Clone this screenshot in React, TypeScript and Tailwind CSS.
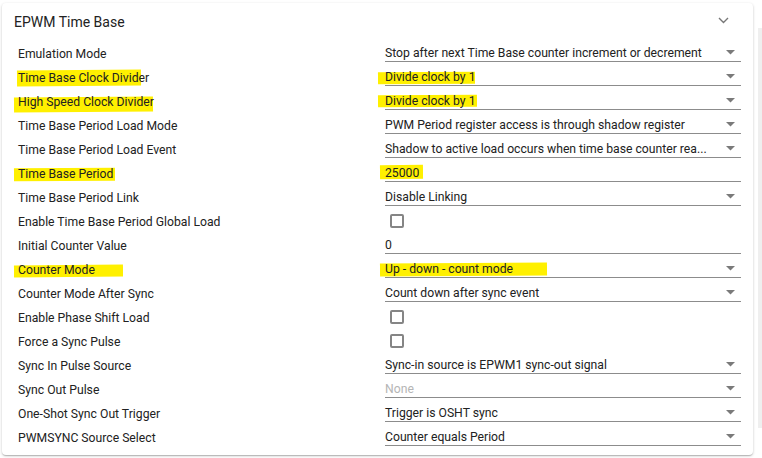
import React from 'react';

type Hl = { left: number; width: number; top: number; height: number };
type Row = {
  label: string;
  kind: 'select' | 'input' | 'check';
  value?: string;
  muted?: boolean;
  labelHl?: Hl;
  valueHl?: Hl;
};

const rows: Row[] = [
  { label: 'Emulation Mode', kind: 'select', value: 'Stop after next Time Base counter increment or decrement' },
  {
    label: 'Time Base Clock Divider', kind: 'select', value: 'Divide clock by 1',
    labelHl: { left: -1, width: 124, top: 5, height: 16 },
    valueHl: { left: -7, width: 97, top: 7, height: 12 },
  },
  {
    label: 'High Speed Clock Divider', kind: 'select', value: 'Divide clock by 1',
    labelHl: { left: -4, width: 139, top: 8, height: 15 },
    valueHl: { left: -7, width: 99, top: 6, height: 12 },
  },
  { label: 'Time Base Period Load Mode', kind: 'select', value: 'PWM Period register access is through shadow register' },
  { label: 'Time Base Period Load Event', kind: 'select', value: 'Shadow to active load occurs when time base counter rea...' },
  {
    label: 'Time Base Period', kind: 'input', value: '25000',
    labelHl: { left: -4, width: 101, top: 7, height: 13 },
    valueHl: { left: -5, width: 43, top: 4, height: 14 },
  },
  { label: 'Time Base Period Link', kind: 'select', value: 'Disable Linking' },
  { label: 'Enable Time Base Period Global Load', kind: 'check' },
  { label: 'Initial Counter Value', kind: 'input', value: '0' },
  {
    label: 'Counter Mode', kind: 'select', value: 'Up - down - count mode',
    labelHl: { left: -4, width: 109, top: 8, height: 12 },
    valueHl: { left: -5, width: 167, top: 6, height: 13 },
  },
  { label: 'Counter Mode After Sync', kind: 'select', value: 'Count down after sync event' },
  { label: 'Enable Phase Shift Load', kind: 'check' },
  { label: 'Force a Sync Pulse', kind: 'check' },
  { label: 'Sync In Pulse Source', kind: 'select', value: 'Sync-in source is EPWM1 sync-out signal' },
  { label: 'Sync Out Pulse', kind: 'select', value: 'None', muted: true },
  { label: 'One-Shot Sync Out Trigger', kind: 'select', value: 'Trigger is OSHT sync' },
  { label: 'PWMSYNC Source Select', kind: 'select', value: 'Counter equals Period' },
];

function Marker({ hl }: { hl?: Hl }) {
  if (!hl) return null;
  return (
    <span
      className="absolute bg-[#fff000] -rotate-[0.4deg]"
      style={{ left: hl.left, width: hl.width, top: hl.top, height: hl.height }}
    />
  );
}

function Caret() {
  return (
    <svg width="9" height="5" viewBox="0 0 9 5" className="shrink-0">
      <path d="M0 0h9L4.5 4.5z" fill="#7a7a7a" />
    </svg>
  );
}

function Field({ row }: { row: Row }) {
  if (row.kind === 'check') {
    return (
      <div className="relative w-[356px] h-6 flex items-center pl-[5px]">
        <span className="w-[14px] h-[14px] border-2 border-[#858585] rounded-[2px] bg-white" />
      </div>
    );
  }
  return (
    <div className="relative w-[356px] h-[21px] border-b border-[#8c8c8c] flex items-start pt-1">
      <Marker hl={row.valueHl} />
      <span
        className={
          'relative flex-1 leading-4 whitespace-nowrap ' +
          (row.muted ? 'text-[#b5b5b5]' : 'text-[#222222]')
        }
      >
        {row.value}
      </span>
      {row.kind === 'select' && (
        <span className="relative mr-[6px] mt-[5px] flex">
          <Caret />
        </span>
      )}
    </div>
  );
}

export default function App() {
  return (
    <div className="w-[762px] h-[458px] bg-white flex pt-[3px] pl-[2px] overflow-hidden font-['Roboto','Liberation_Sans',sans-serif]">
      <div className="w-[751px] h-[452px] rounded-[4px] bg-white shadow-[0_1px_3px_rgba(0,0,0,0.2),0_1px_1px_rgba(0,0,0,0.1),0_2px_1px_-1px_rgba(0,0,0,0.08)] flex flex-col">
        <div className="h-[38px] flex items-center justify-between pl-3 pr-[24px] pb-[1px]">
          <span className="text-[14px] text-[#222222] leading-5">EPWM Time Base</span>
          <svg width="11" height="7" viewBox="0 0 11 7" className="-mt-[2px]">
            <path d="M1 1l4.5 4.5L10 1" fill="none" stroke="#777777" strokeWidth="1.4" />
          </svg>
        </div>
        <div className="flex flex-col text-[12.2px] pl-4">
          {rows.map((r) => (
            <div key={r.label} className="h-6 flex items-start">
              <div className="relative w-[367px] h-6 pt-1">
                <Marker hl={r.labelHl} />
                <span className="relative leading-4 text-[#222222] whitespace-nowrap">{r.label}</span>
              </div>
              <Field row={r} />
            </div>
          ))}
        </div>
      </div>
      <div className="ml-[5px] mt-[25px] w-[4px] h-[400px] bg-[#efefef]" />
    </div>
  );
}
